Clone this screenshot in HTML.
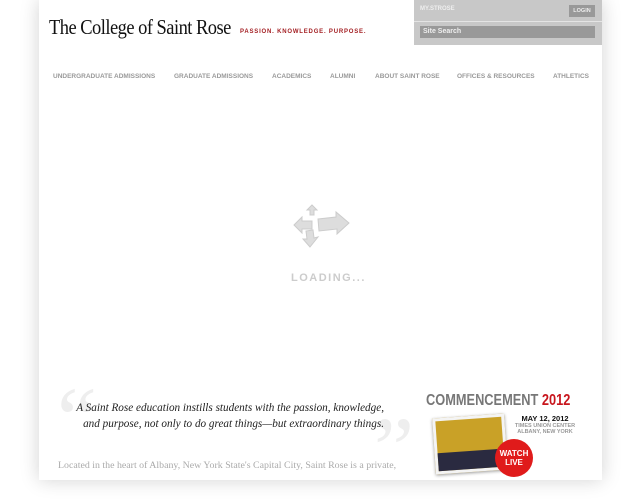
<!DOCTYPE html>
<html><head><style>
body{margin:0;background:#fff;width:640px;height:480px;overflow:hidden;position:relative;font-family:"Liberation Sans",sans-serif}
#pg{position:absolute;left:39px;top:0;width:563px;height:480px;background:#fff;box-shadow:0 0 18px rgba(0,0,0,.18)}
.logo{position:absolute;left:10px;top:15px;font-family:"Liberation Serif",serif;font-size:21px;color:#111;letter-spacing:-0.6px;white-space:nowrap;transform:scaleX(.88);transform-origin:left}
.tag{position:absolute;left:201px;top:29px;font-size:6px;font-weight:bold;color:#a31e22;letter-spacing:.8px;white-space:nowrap}
.util{position:absolute;left:375px;top:0;width:188px;height:45px;background:#c8c8c8}
.util .my{position:absolute;left:6px;top:6px;font-size:6px;color:#eee;font-weight:bold}
.util .lg{position:absolute;left:155px;top:5px;width:26px;height:12px;background:#999;color:#eee;font-size:5.5px;line-height:12px;text-align:center;font-weight:bold}
.util .ln{position:absolute;left:0;top:21px;width:188px;height:1px;background:#e4e4e4}
.util .ss{position:absolute;left:6px;top:26px;width:175px;height:12px;background:#999;color:#eee;font-size:7px;font-weight:bold;line-height:12px;text-indent:3px}
.nav{position:absolute;top:73px;font-size:6.5px;font-weight:bold;color:#999;white-space:nowrap}
.ld{position:absolute;left:252px;top:272px;font-size:11px;font-weight:bold;color:#ccc;letter-spacing:1.5px}
.q{position:absolute;font-family:"Liberation Serif",serif;font-size:90px;color:#eee;line-height:1}
.quote{position:absolute;left:10px;top:400px;width:335px;text-align:right;font-family:"Liberation Serif",serif;font-style:italic;font-size:11.2px;line-height:16px;color:#222}
.loc{position:absolute;left:19px;top:460px;font-family:"Liberation Serif",serif;font-size:9.9px;color:#aaa;white-space:nowrap}
.cm{position:absolute;left:387px;top:392px;font-size:16px;font-weight:bold;color:#777;transform:scaleX(.8);transform-origin:left;white-space:nowrap}
.cm b{color:#c8161d}
.dt{position:absolute;left:474px;top:414px;width:64px;text-align:center;font-size:7.5px;font-weight:bold;color:#111;line-height:9px;white-space:nowrap}
.dt span{color:#999;font-size:5.5px;line-height:6px;display:block}
.ph{position:absolute;left:395px;top:416px;width:66px;height:50px;background:#c9a127;border:3px solid #f4f4f4;box-shadow:0 1px 3px rgba(0,0,0,.4);transform:rotate(-4deg)}
.ph:after{content:"";position:absolute;left:0;bottom:0;width:66px;height:18px;background:#2a2a40}
.wl{position:absolute;left:456px;top:439px;width:38px;height:38px;border-radius:50%;background:#e01b1b;color:#fff;font-size:8px;font-weight:bold;text-align:center;line-height:9px;box-sizing:border-box;padding-top:10px}
</style></head><body>
<div id="pg">
<div class="logo">The College of Saint Rose</div>
<div class="tag">PASSION. KNOWLEDGE. PURPOSE.</div>
<div class="util"><div class="my">MY.STROSE</div><div class="lg">LOGIN</div><div class="ln"></div><div class="ss">Site Search</div></div>
<div class="nav" style="left:14px">UNDERGRADUATE ADMISSIONS</div>
<div class="nav" style="left:135px">GRADUATE ADMISSIONS</div>
<div class="nav" style="left:233px">ACADEMICS</div>
<div class="nav" style="left:291px">ALUMNI</div>
<div class="nav" style="left:336px">ABOUT SAINT ROSE</div>
<div class="nav" style="left:418px">OFFICES &amp; RESOURCES</div>
<div class="nav" style="left:514px">ATHLETICS</div>
<svg style="position:absolute;left:253px;top:203px" width="60" height="48" viewBox="0 0 60 48" fill="#ddd" stroke="#ccc" stroke-width="1">
<path d="M20 2 L25 7 L22 7 L22 12 L18 12 L18 7 L15 7Z"/>
<path d="M2 22 L10 14 L10 18 L20 18 L20 26 L10 26 L10 30Z"/>
<path d="M26 16 L44 14 L44 9 L57 20 L45 31 L45 26 L27 28Z"/>
<path d="M18 44 L11 36 L15 36 L14 28 L21 27 L22 35 L26 34Z"/>
</svg>
<div class="ld">LOADING...</div>
<div class="q" style="left:18px;top:375px">“</div>
<div class="q" style="left:335px;top:405px">”</div>
<div class="quote">A Saint Rose education instills students with the passion, knowledge,<br>and purpose, not only to do great things—but extraordinary things.</div>
<div class="loc">Located in the heart of Albany, New York State's Capital City, Saint Rose is a private,</div>
<div class="cm">COMMENCEMENT <b>2012</b></div>
<div class="dt">MAY 12, 2012<span>TIMES UNION CENTER<br>ALBANY, NEW YORK</span></div>
<div class="ph"></div>
<div class="wl">WATCH<br>LIVE</div>
</div>
</body></html>
